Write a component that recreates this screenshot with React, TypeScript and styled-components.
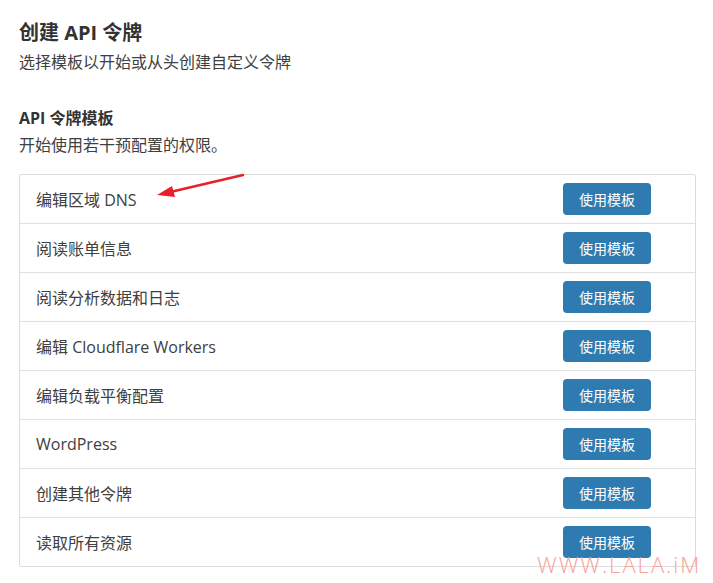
import React from "react";
import styled, { createGlobalStyle } from "styled-components";

const Global = createGlobalStyle`
  html, body { margin: 0; padding: 0; background: #fff; }
  body {
    font-family: "Open Sans", "Noto Sans CJK SC", sans-serif;
    color: #333;
    width: 713px;
    height: 583px;
    overflow: hidden;
  }
`;

const Page = styled.div`
  position: relative;
  width: 713px;
  height: 583px;
  padding: 19px 17px 0 19px;
  box-sizing: border-box;
`;

const Title = styled.h1`
  margin: 0;
  font-size: 20px;
  line-height: 28px;
  font-weight: 700;
  color: #333;
`;

const Sub = styled.p`
  margin: 2px 0 0;
  font-size: 16px;
  line-height: 26px;
  color: #404040;
`;

const SectionTitle = styled.h2`
  margin: 31px 0 0;
  font-size: 16px;
  line-height: 24px;
  font-weight: 700;
  color: #333;
`;

const List = styled.div`
  margin-top: 16px;
  border: 1px solid #dcdcdc;
  border-radius: 2px;
  display: flex;
  flex-direction: column;
`;

const Row = styled.div<{ $last?: boolean }>`
  height: 48px;
  display: flex;
  align-items: center;
  justify-content: space-between;
  padding: 0 44px 0 16px;
  border-bottom: ${(p) => (p.$last ? "none" : "1px solid #e0e0e0")};
`;

const Label = styled.span`
  font-size: 16px;
  color: #404040;
`;

const Button = styled.button`
  width: 88px;
  height: 32px;
  border: none;
  border-radius: 4px;
  background: #2d7bb0;
  color: #fff;
  font-family: "Noto Sans CJK SC", sans-serif;
  font-size: 14px;
  padding: 0;
  cursor: pointer;
`;

const Arrow = styled.svg`
  position: absolute;
  left: 150px;
  top: 168px;
`;

const Watermark = styled.div`
  position: absolute;
  left: 537px;
  top: 551px;
  font-family: "Open Sans", sans-serif;
  font-weight: 300;
  font-size: 22px;
  line-height: 26px;
  color: #f7a099;
  letter-spacing: 2px;
`;

const items = [
  "编辑区域 DNS",
  "阅读账单信息",
  "阅读分析数据和日志",
  "编辑 Cloudflare Workers",
  "编辑负载平衡配置",
  "WordPress",
  "创建其他令牌",
  "读取所有资源",
];

export default function App() {
  return (
    <Page>
      <Global />
      <Title>创建 API 令牌</Title>
      <Sub>选择模板以开始或从头创建自定义令牌</Sub>
      <SectionTitle>API 令牌模板</SectionTitle>
      <Sub>开始使用若干预配置的权限。</Sub>
      <List>
        {items.map((t, i) => (
          <Row key={t} $last={i === items.length - 1}>
            <Label>{t}</Label>
            <Button>使用模板</Button>
          </Row>
        ))}
      </List>
      <Arrow width="100" height="35" viewBox="0 0 100 35">
        <line x1="93" y1="7" x2="16" y2="25" stroke="#e8202a" strokeWidth="2.5" strokeLinecap="round" />
        <polygon points="7,27 22,18 25,29" fill="#e8202a" />
      </Arrow>
      <Watermark>WWW.LALA.iM</Watermark>
    </Page>
  );
}
